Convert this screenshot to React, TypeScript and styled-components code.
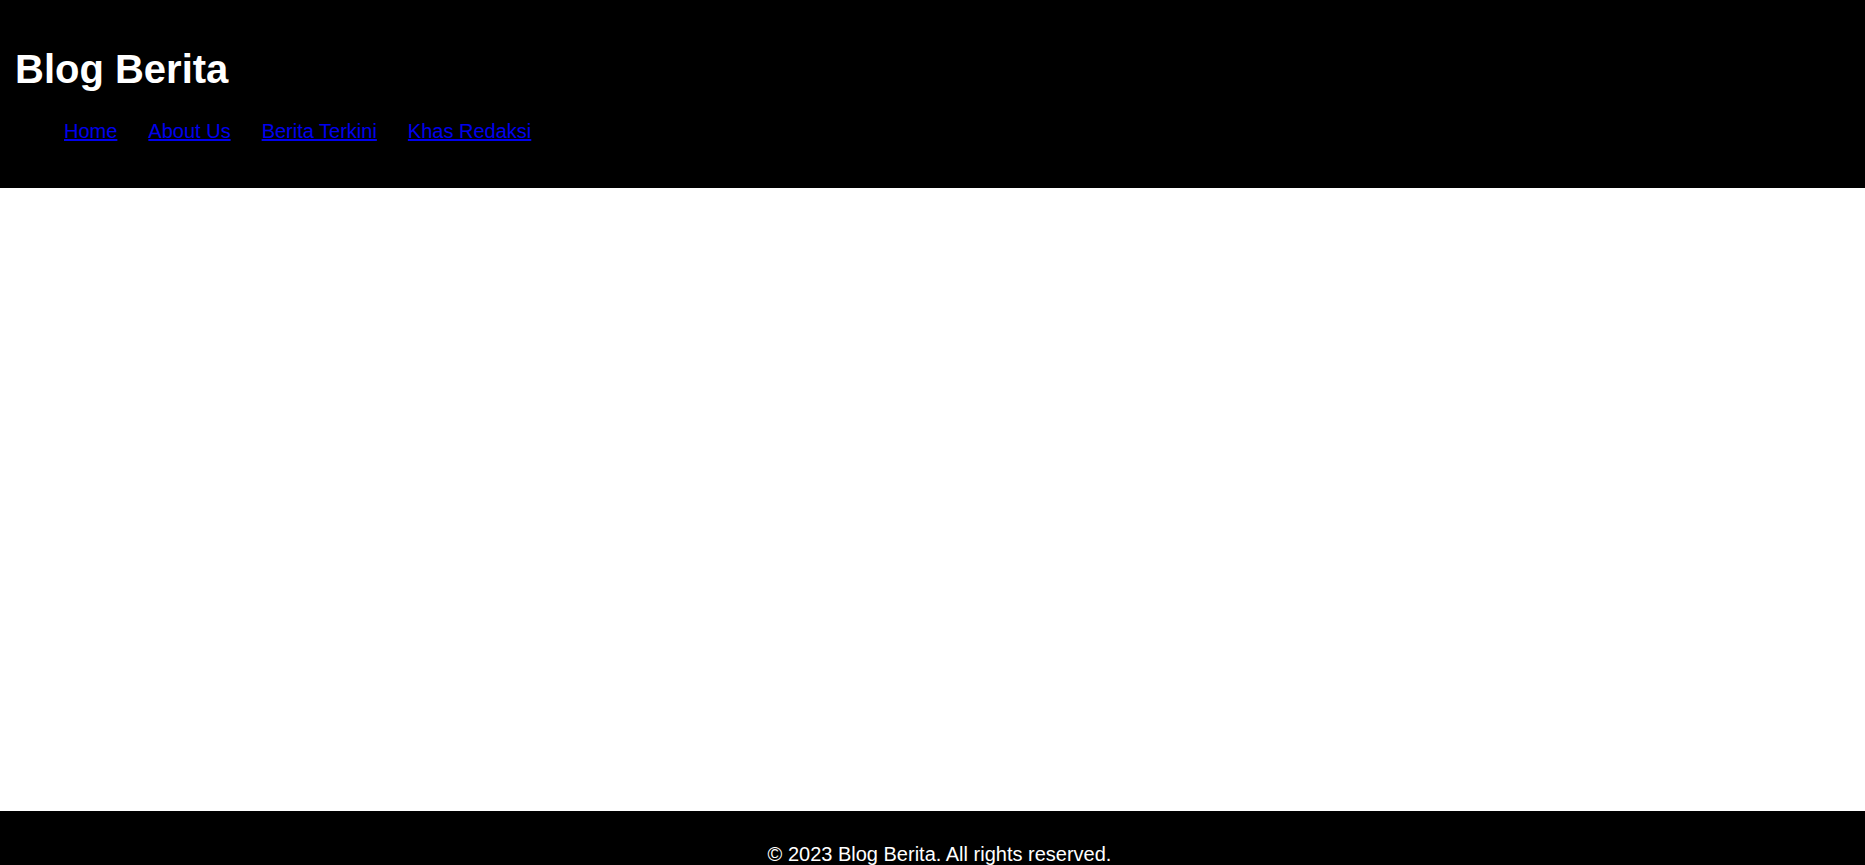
import React from 'react'
import styled, { createGlobalStyle } from 'styled-components'

const GlobalStyle = createGlobalStyle`
  html, body {
    margin: 0;
    padding: 0;
    height: 100%;
    overflow: hidden;
    background: #ffffff;
    font-family: "Liberation Sans", Arial, sans-serif;
  }
  #root {
    height: 100%;
  }
`

const Page = styled.div`
  display: flex;
  flex-direction: column;
  height: 100%;
`

const Header = styled.header`
  background-color: #000000;
  color: #ffffff;
  padding: 46px 15px 45px;
  flex-shrink: 0;
`

const Title = styled.h1`
  margin: 0 0 28px;
  font-size: 40px;
  line-height: 46px;
  font-weight: 700;
`

const NavList = styled.ul`
  display: flex;
  gap: 31px;
  list-style: none;
  margin: 0;
  padding: 0 0 0 49px;
`

const NavItem = styled.li`
  font-size: 20px;
  line-height: 23px;
`

const NavLink = styled.a`
  color: #0000ee;
  text-decoration: underline;
`

const Main = styled.main`
  flex: 1;
  min-height: 0;
`

const Footer = styled.footer`
  background-color: #000000;
  color: #ffffff;
  height: 54px;
  flex-shrink: 0;
  padding: 32px 0 0 14px;
  box-sizing: border-box;
  text-align: center;
  overflow: hidden;
`

const FooterText = styled.p`
  margin: 0;
  font-size: 20px;
  line-height: 23px;
`

const links = ['Home', 'About Us', 'Berita Terkini', 'Khas Redaksi']

export default function App() {
  return (
    <>
      <GlobalStyle />
      <Page>
        <Header>
          <Title>Blog Berita</Title>
          <nav>
            <NavList>
              {links.map((label) => (
                <NavItem key={label}>
                  <NavLink href="#">{label}</NavLink>
                </NavItem>
              ))}
            </NavList>
          </nav>
        </Header>
        <Main />
        <Footer>
          <FooterText>© 2023 Blog Berita. All rights reserved.</FooterText>
        </Footer>
      </Page>
    </>
  )
}
